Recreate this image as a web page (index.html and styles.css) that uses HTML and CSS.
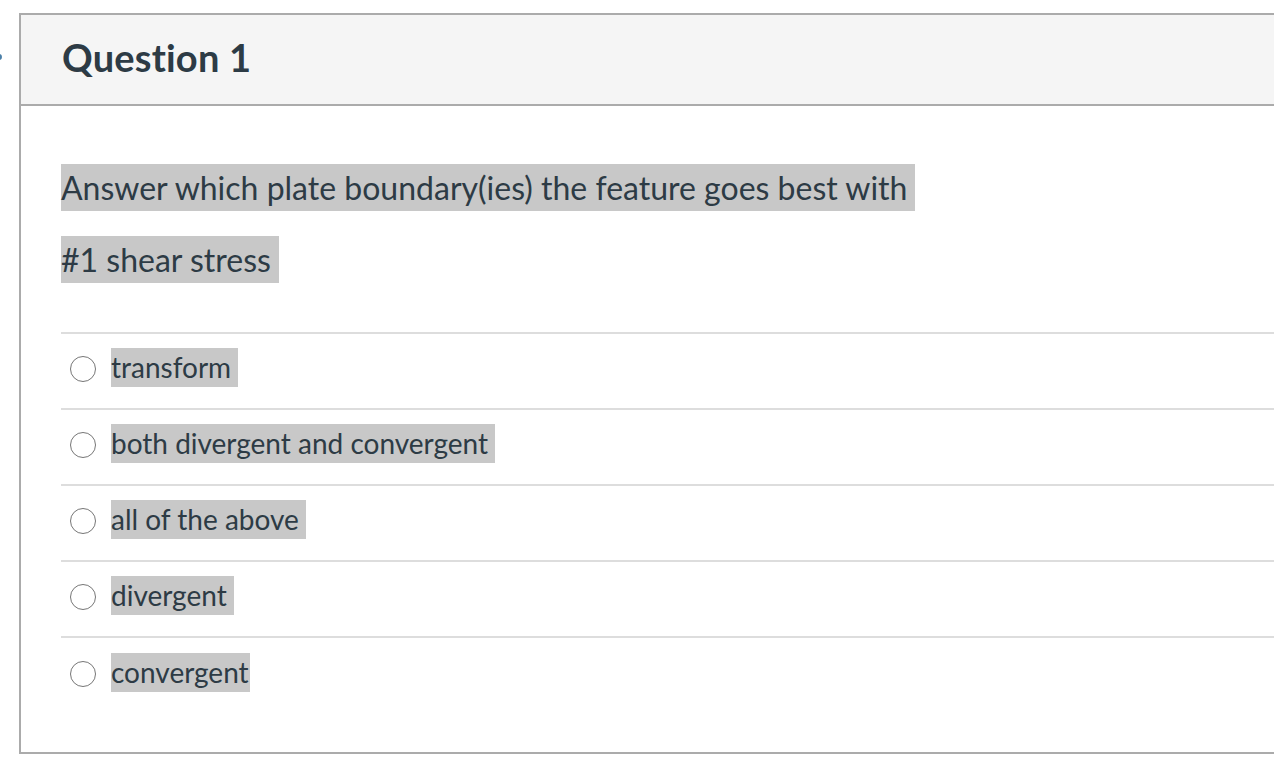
FILE: index.html
```html
<!DOCTYPE html>
<html>
<head>
<meta charset="utf-8">
<link rel="stylesheet" href="styles.css">
</head>
<body>
<span class="edge-dot"></span>
<div class="card">
  <div class="card-header">
    <h2 class="title">Question 1</h2>
  </div>
  <div class="card-body">
    <p class="q-line"><span class="hl">Answer which plate boundary(ies) the feature goes best with</span></p>
    <p class="q-line"><span class="hl">#1 shear stress</span></p>
    <div class="answers">
      <label class="answer"><span class="radio"></span><span class="hl ans">transform</span></label>
      <label class="answer"><span class="radio"></span><span class="hl ans">both divergent and convergent</span></label>
      <label class="answer"><span class="radio"></span><span class="hl ans">all of the above</span></label>
      <label class="answer"><span class="radio"></span><span class="hl ans">divergent</span></label>
      <label class="answer"><span class="radio"></span><span class="hl ans tight">convergent</span></label>
    </div>
  </div>
</div>
</body>
</html>
```
FILE: styles.css
```css
html, body {
  margin: 0;
  padding: 0;
  background: #ffffff;
  overflow: hidden;
  width: 1274px;
  height: 770px;
}
body {
  font-family: Lato, "Open Sans", sans-serif;
  color: #2d3b45;
  position: relative;
}
.edge-dot {
  position: absolute;
  left: -4px;
  top: 54px;
  width: 6px;
  height: 6px;
  border-radius: 50%;
  background: #4a7fa8;
}
.card {
  margin: 13px 0 0 19px;
  width: 1300px;
  height: 741px;
  border: 2px solid #ababab;
  border-right: none;
  box-sizing: border-box;
}
.card-header {
  background: #f5f5f5;
  border-bottom: 2px solid #ababab;
  height: 91px;
  box-sizing: border-box;
  display: flex;
  align-items: center;
  padding: 0 0 6px 41px;
}
.title {
  margin: 0;
  font-size: 38px;
  font-weight: 700;
  letter-spacing: 0.2px;
}
.card-body {
  padding: 58px 0 0 40px;
}
.q-line {
  margin: 0 0 25px 0;
  font-size: 32px;
  line-height: 47px;
}
.hl {
  background: #c8c8c8;
  padding-right: 8px;
  display: inline-block;
}
.answers {
  margin-top: 49px;
  border-top: 2px solid #dddddd;
}
.answer {
  display: flex;
  align-items: center;
  height: 76px;
  padding-bottom: 7px;
  border-bottom: 2px solid #dddddd;
  box-sizing: border-box;
}
.answer:last-child {
  border-bottom: none;
}
.radio {
  width: 26px;
  height: 26px;
  border: 1px solid #767676;
  border-radius: 50%;
  box-sizing: border-box;
  margin: 3px 15px 0 9px;
  background: #fff;
}
.ans {
  font-size: 28px;
  line-height: 39px;
  padding-right: 7px;
}
.ans.tight {
  padding-right: 1px;
}
```
